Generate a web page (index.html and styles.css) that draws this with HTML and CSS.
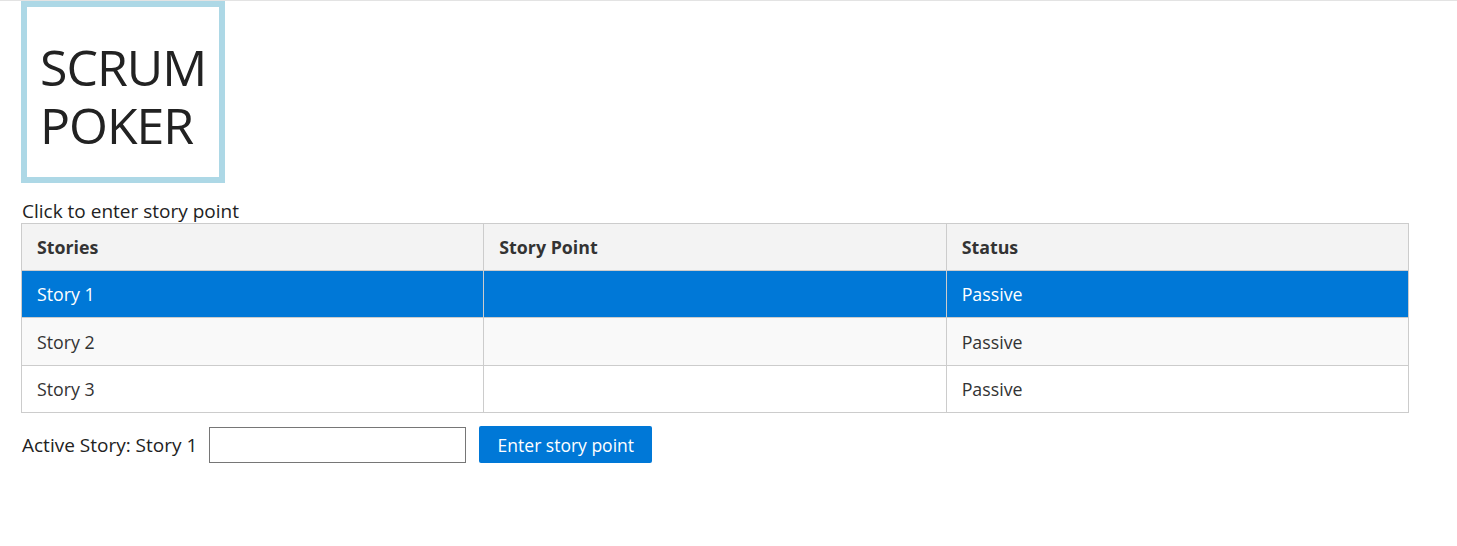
FILE: index.html
```html
<!DOCTYPE html>
<html>
<head>
<meta charset="utf-8">
<link rel="stylesheet" href="styles.css">
</head>
<body>
<div class="page">
  <div class="logo">SCRUM<br>POKER</div>
  <div class="hint">Click to enter story point</div>
  <table class="stories">
    <thead>
      <tr><th>Stories</th><th>Story Point</th><th>Status</th></tr>
    </thead>
    <tbody>
      <tr class="active"><td>Story 1</td><td></td><td>Passive</td></tr>
      <tr class="alt"><td>Story 2</td><td></td><td>Passive</td></tr>
      <tr><td>Story 3</td><td></td><td>Passive</td></tr>
    </tbody>
  </table>
  <div class="entry">
    <span class="label">Active Story: Story 1</span>
    <input class="point" type="text">
    <button class="btn">Enter story point</button>
  </div>
</div>
</body>
</html>
```

FILE: styles.css
```css
html, body {
  margin: 0;
  padding: 0;
  background: #fff;
}
body {
  font-family: "Open Sans", "Segoe UI", sans-serif;
  color: #222;
  border-top: 1px solid #e3e3e3;
}
.page {
  padding: 0 21px;
}
.logo {
  box-sizing: border-box;
  width: 204px;
  height: 182px;
  border: 6px solid #add8e6;
  padding: 31px 0 0 13px;
  font-size: 50px;
  line-height: 58px;
  color: #222;
  letter-spacing: -1px;
}
.hint {
  margin-top: 16px;
  font-size: 19px;
  line-height: 24px;
  padding-left: 1px;
}
.stories {
  width: 1388px;
  border-collapse: collapse;
  table-layout: fixed;
  font-size: 17.8px;
  color: #333;
}
.stories th, .stories td {
  border: 1px solid #cccccc;
  height: 47px;
  padding: 0 15px;
  text-align: left;
  box-sizing: border-box;
}
.stories td {
  height: 47.4px;
}
.stories th {
  background: #f3f3f3;
  font-weight: 700;
}
.stories tr.active td {
  background: #0078d7;
  color: #fff;
}
.stories tr.alt td {
  background: #f9f9f9;
}
.entry {
  display: flex;
  align-items: center;
  margin-top: 13px;
  padding-left: 1px;
}
.label {
  font-size: 19px;
  color: #222;
}
.point {
  box-sizing: border-box;
  width: 257px;
  height: 36px;
  margin: 0 0 0 12px;
  border: 1px solid #767676;
  padding: 0 6px;
}
.btn {
  box-sizing: border-box;
  height: 37px;
  width: 173px;
  margin-left: 13px;
  background: #0078d7;
  border: none;
  border-radius: 2px;
  color: #fff;
  font-family: "Open Sans", sans-serif;
  font-size: 17.5px;
}
```
